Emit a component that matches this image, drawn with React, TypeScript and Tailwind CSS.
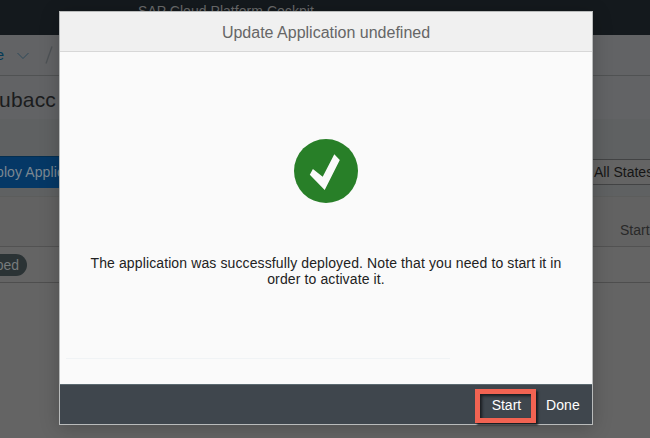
import React from "react";

function Cockpit() {
  return (
    <div className="flex h-[438px] w-[650px] flex-col bg-[#646464]">
      <header className="h-[35px] shrink-0 overflow-hidden bg-[#14191d] pl-[138px] pt-[3px] text-[14px] leading-[16px] tracking-[0.04px] whitespace-nowrap text-[#696a6b]">
        SAP Cloud Platform Cockpit
      </header>
      <nav className="flex h-[41px] shrink-0 items-center border-b border-[#505253] bg-[#626365] text-[15px] text-[#043a56]">
        <span className="-ml-[5px] w-[9px] text-right">e</span>
        <svg className="ml-[13px] mt-[2px]" width="12" height="8" viewBox="0 0 12 8" fill="none" stroke="#2f4b5b">
          <path d="M.5 1 6 6.5 11.5 1" />
        </svg>
        <svg className="ml-[16px]" width="8" height="18" viewBox="0 0 8 18" stroke="#4e5255" strokeWidth="1.3">
          <path d="M1 17.5 7 .5" />
        </svg>
      </nav>
      <div className="flex h-[43px] shrink-0 items-center bg-[#626365] pt-[4px] text-[21px] tracking-[0.2px] text-[#1b1c1d]">
        <span className="-ml-px">ubacc</span>
      </div>
      <div className="flex h-[78px] shrink-0 items-start justify-between border-b border-[#5c5d5c] bg-[#5f6162] pt-[37px]">
        <div className="flex h-[32px] w-[120px] items-center overflow-hidden border-t border-[#052f50] bg-[#053866] text-[14px] whitespace-nowrap text-[#7b8791]">
          <span className="-ml-[4px] tracking-[0.1px]">ploy Application</span>
        </div>
        <div className="mt-[3px] flex h-[26px] w-[80px] items-center overflow-hidden border-y border-[#424344] bg-[#646464] pl-[24px] pt-[1px] text-[14px] whitespace-nowrap text-[#151515]">
          All States
        </div>
      </div>
      <div className="flex h-[50px] shrink-0 items-center justify-end overflow-hidden border-b border-[#525252] bg-[#626262] pt-[18px] text-[14px] text-[#292929]">
        <span className="w-[30px] whitespace-nowrap">Start</span>
      </div>
      <div className="flex h-[36px] shrink-0 items-center border-b border-[#4e4e4e]">
        <span className="mt-[1px] flex h-[22px] w-[27px] items-center justify-end rounded-r-full bg-[#2b3335] pr-[8px] text-[14px] text-[#777b7c]">
          ped
        </span>
      </div>
    </div>
  );
}

function SuccessIcon() {
  return (
    <svg className="mt-[87px]" width="64" height="64" viewBox="0 0 64 64">
      <circle cx="32" cy="32" r="32" fill="#287f28" />
      <path d="M18.9 30 28.7 37.7 40.3 15.3 45.8 21 30.7 51 15.8 35.8Z" fill="#fafafa" />
    </svg>
  );
}

function UpdateDialog() {
  return (
    <section
      role="dialog"
      className="absolute left-[59px] top-[11px] flex h-[414px] w-[534px] flex-col border border-[#b9bbbb] bg-[#fafafa] shadow-[0_3px_18px_rgba(0,0,0,0.22)]"
    >
      <h1 className="flex h-[40px] shrink-0 items-center justify-center border-b border-[#d7d7d7] bg-[#f0f0f0] pt-[2px] text-[16px] text-[#666]">
        Update Application undefined
      </h1>
      <div className="flex flex-1 flex-col items-center">
        <SuccessIcon />
        <p className="mt-[52px] text-center text-[14px] leading-[16px] tracking-[0.115px] text-[#222]">
          The application was successfully deployed. Note that you need to start it in
          <br />
          order to activate it.
        </p>
        <hr className="mt-[71px] ml-[6px] w-[384px] self-start border-t border-[#f0f3f5]" />
      </div>
      <footer className="flex h-[40px] shrink-0 items-center justify-end border-t border-[#5b6970] bg-[#3f464d] pr-[12px] text-[14px] text-white [text-shadow:0_1px_1px_#000]">
        <button className="mr-[10px] mt-[2px] flex h-[34px] w-[61px] items-center justify-center border-[5px] border-[#f26352] pb-[1px] pl-[2px] shadow-[2px_2px_2px_#191c20,inset_2px_2px_3px_#191c20]">
          Start
        </button>
        <button className="mt-[2px] tracking-[0.15px]">Done</button>
      </footer>
    </section>
  );
}

export default function App() {
  return (
    <main className="relative h-[438px] w-[650px] overflow-hidden font-['Liberation_Sans',Arial,sans-serif]">
      <Cockpit />
      <UpdateDialog />
    </main>
  );
}
